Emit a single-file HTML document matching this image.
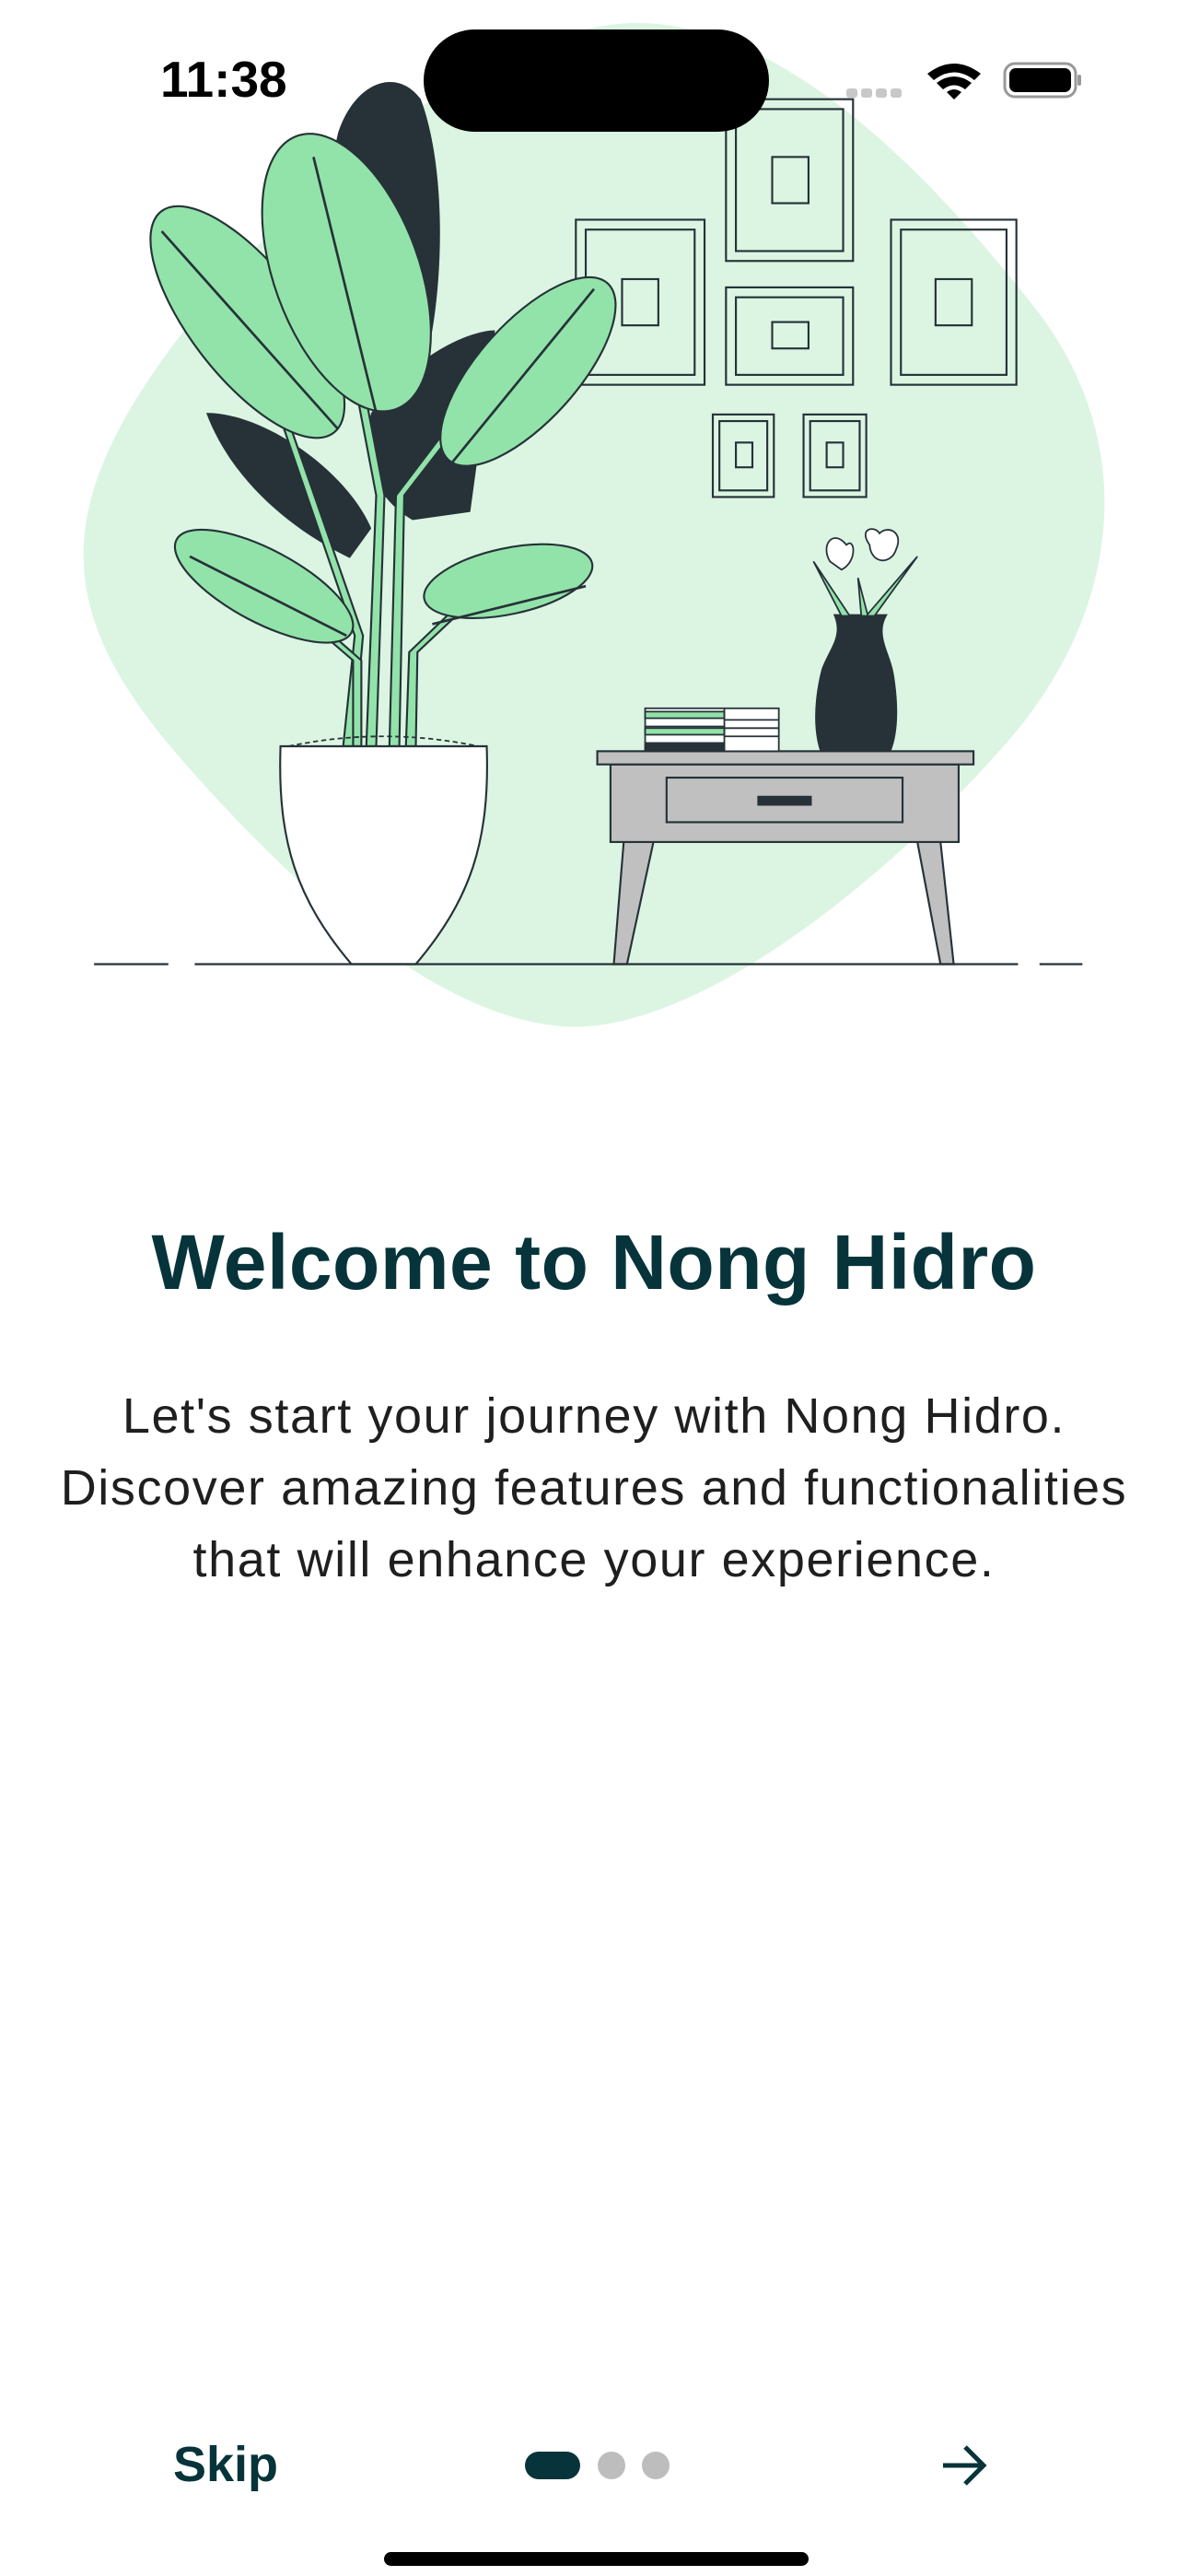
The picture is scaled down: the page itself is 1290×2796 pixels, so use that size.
<!DOCTYPE html>
<html><head><meta charset="utf-8"><style>
html,body{margin:0;padding:0;background:#fff;}
body{width:1290px;height:2796px;position:relative;overflow:hidden;font-family:"Liberation Sans",sans-serif;}
.abs{position:absolute;}
h1{position:absolute;left:0;width:1290px;top:1322px;margin:0;text-align:center;font-size:84px;font-weight:bold;color:#06343a;letter-spacing:0.5px;}
p{position:absolute;left:0;width:1290px;top:1498px;margin:0;text-align:center;font-size:54px;line-height:78px;color:#1f1f1f;letter-spacing:1.6px;}
</style></head><body>
<svg class="abs" style="left:0;top:0" width="1290" height="1147" viewBox="0 0 720 640">
<path d="M380 14 C470 10 560 100 630 190 C690 270 680 370 610 450 C540 530 430 620 350 622 C270 622 180 540 110 460 C40 380 30 320 90 230 C150 140 280 20 380 14 Z" fill="#dcf5e3"/>
<g fill="none" stroke="#263238" stroke-width="1.2">
<rect x="349" y="133" width="78" height="100"/><rect x="355" y="139" width="66" height="88"/><rect x="377" y="169" width="22" height="28"/>
<rect x="440" y="60" width="77" height="98"/><rect x="446" y="66" width="65" height="86"/><rect x="468" y="95" width="22" height="28"/>
<rect x="540" y="133" width="76" height="100"/><rect x="546" y="139" width="64" height="88"/><rect x="567" y="169" width="22" height="28"/>
<rect x="440" y="174" width="77" height="59"/><rect x="446" y="180" width="65" height="47"/><rect x="468" y="195" width="22" height="16"/>
<rect x="432" y="251" width="37" height="50"/><rect x="436" y="255" width="29" height="42"/><rect x="446" y="268" width="10" height="15"/>
<rect x="487" y="251" width="38" height="50"/><rect x="491" y="255" width="30" height="42"/><rect x="501" y="268" width="10" height="15"/>
</g>
<g fill="#263238">
<path d="M205 80 C215 50 240 40 255 60 C270 100 270 170 258 220 L230 240 C205 180 195 120 205 80Z"/>
<path d="M125 250 C160 250 210 285 225 320 L212 338 C175 320 140 290 125 250Z"/>
<path d="M225 250 C250 215 285 200 300 200 L285 310 L250 315 C225 300 218 275 225 250Z"/>
</g>
<g stroke="#263238" stroke-width="1.2" fill="#92e3a9">
<path d="M208 452 L215 385 L150 195 L154 195 L220 385 L214 452Z"/>
<path d="M222 452 L228 300 L190 100 L195 100 L233 300 L228 452Z"/>
<path d="M236 452 L240 300 L320 195 L324 198 L245 300 L242 452Z"/>
<path d="M214 452 L214 400 L150 345 L154 343 L219 400 L219 452Z"/>
<path d="M246 452 L248 395 L300 345 L303 348 L253 395 L252 452Z"/>
</g>
<g fill="#92e3a9" stroke="#263238" stroke-width="1.2">
<ellipse cx="150" cy="195" rx="85" ry="34" transform="rotate(52 150 195)"/>
<ellipse cx="210" cy="165" rx="88" ry="44" transform="rotate(70 210 165)"/>
<ellipse cx="320" cy="225" rx="72" ry="30" transform="rotate(-48 320 225)"/>
<ellipse cx="160" cy="355" rx="60" ry="22" transform="rotate(28 160 355)"/>
<ellipse cx="308" cy="352" rx="52" ry="20" transform="rotate(-12 308 352)"/>
</g>
<g stroke="#263238" stroke-width="1.5" fill="none">
<path d="M98 140 L205 260"/><path d="M190 95 L228 250"/><path d="M360 175 L270 285"/><path d="M115 337 L210 385"/><path d="M355 355 L262 378"/>
</g>
<path d="M170 452 L295 452 C297 510 285 545 252 584 L213 584 C180 545 168 510 170 452Z" fill="#fff" stroke="#263238" stroke-width="1.2"/>
<path d="M175 452 Q232 440 290 452" fill="none" stroke="#263238" stroke-width="1" stroke-dasharray="3 2"/>
<g stroke="#263238" stroke-width="1.2">
<path d="M378 510 L396 510 L380 584 L372 584Z" fill="#c0c0c0"/>
<path d="M556 510 L570 510 L578 584 L570 584Z" fill="#c0c0c0"/>
<rect x="370" y="463" width="211" height="47" fill="#c0c0c0"/>
<rect x="362" y="455" width="228" height="8" fill="#c0c0c0"/>
<rect x="404" y="471" width="143" height="27" fill="#c0c0c0"/>
</g>
<rect x="459" y="482" width="33" height="6" fill="#263238"/>
<g stroke="#263238" stroke-width="1">
<rect x="391" y="429" width="81" height="26" fill="#fff"/>
<rect x="391" y="431" width="48" height="4" fill="#92e3a9"/>
<rect x="391" y="441" width="48" height="4" fill="#92e3a9"/>
<rect x="391" y="450" width="48" height="5" fill="#263238"/>
<line x1="439" y1="429" x2="439" y2="455"/><line x1="439" y1="436" x2="472" y2="436"/><line x1="439" y1="441" x2="472" y2="441"/><line x1="439" y1="446" x2="472" y2="446"/><line x1="391" y1="440" x2="439" y2="440"/>
</g>
<path d="M505 372 L538 372 C530 385 540 395 542 410 C545 430 544 445 540 455 L497 455 C492 440 494 420 498 405 C503 392 511 385 505 372Z" fill="#263238"/>
<g stroke="#263238" stroke-width="1" fill="#92e3a9">
<path d="M493 340 L515 373 L510 373Z"/><path d="M556 337 L525 373 L530 373Z"/><path d="M520 350 L522 373 L526 373Z"/>
</g>
<g stroke="#263238" stroke-width="1" fill="#fff">
<path d="M503 340 C497 330 505 320 513 330 C518 325 520 340 510 345Z"/>
<path d="M527 330 C520 320 530 318 533 323 C538 318 548 322 543 333 C540 342 528 342 527 330Z"/>
</g>
<g stroke="#263238" stroke-width="1.2">
<line x1="57" y1="584" x2="102" y2="584"/><line x1="118" y1="584" x2="617" y2="584"/><line x1="630" y1="584" x2="656" y2="584"/>
</g>
</svg>
<div class="abs" style="left:460px;top:32px;width:375px;height:111px;background:#000;border-radius:56px;"></div>
<div class="abs" style="left:174px;top:54px;font-size:55px;font-weight:bold;color:#000;">11:38</div>
<svg class="abs" style="left:915px;top:66px" width="260" height="44" viewBox="0 0 260 44">
<g fill="#c8c8c8"><rect x="4" y="30" width="12" height="10" rx="3"/><rect x="20" y="30" width="12" height="10" rx="3"/><rect x="36" y="30" width="12" height="10" rx="3"/><rect x="52" y="30" width="12" height="10" rx="3"/></g>
<path d="M92 14 Q121 -8 150 14 L143 21 Q121 4 99 21Z M102 24 Q121 10 140 24 L133 31 Q121 22 109 31Z M113 34 Q121 28 129 34 L121 42Z" fill="#000"/>
<rect x="176" y="3" width="77" height="36" rx="11" fill="none" stroke="#999" stroke-width="3"/>
<rect x="181" y="8" width="67" height="26" rx="7" fill="#000"/>
<rect x="255" y="15" width="4" height="12" rx="2" fill="#999"/>
</svg>
<h1>Welcome to Nong Hidro</h1>
<p>Let's start your journey with Nong Hidro.<br>Discover amazing features and functionalities<br>that will enhance your experience.</p>
<div class="abs" style="left:188px;top:2644px;font-size:54px;font-weight:bold;color:#06343a;">Skip</div>
<div class="abs" style="left:570px;top:2661px;width:60px;height:30px;border-radius:15px;background:#06343a;"></div>
<div class="abs" style="left:649px;top:2661px;width:30px;height:30px;border-radius:15px;background:#bdbdbd;"></div>
<div class="abs" style="left:697px;top:2661px;width:30px;height:30px;border-radius:15px;background:#bdbdbd;"></div>
<svg class="abs" style="left:1020px;top:2650px" width="54" height="52" viewBox="0 0 54 52"><path d="M4 26 H48 M28 6 L48 26 L28 46" fill="none" stroke="#06343a" stroke-width="5"/></svg>
<div class="abs" style="left:417px;top:2770px;width:461px;height:15px;border-radius:8px;background:#000;"></div>
</body></html>
